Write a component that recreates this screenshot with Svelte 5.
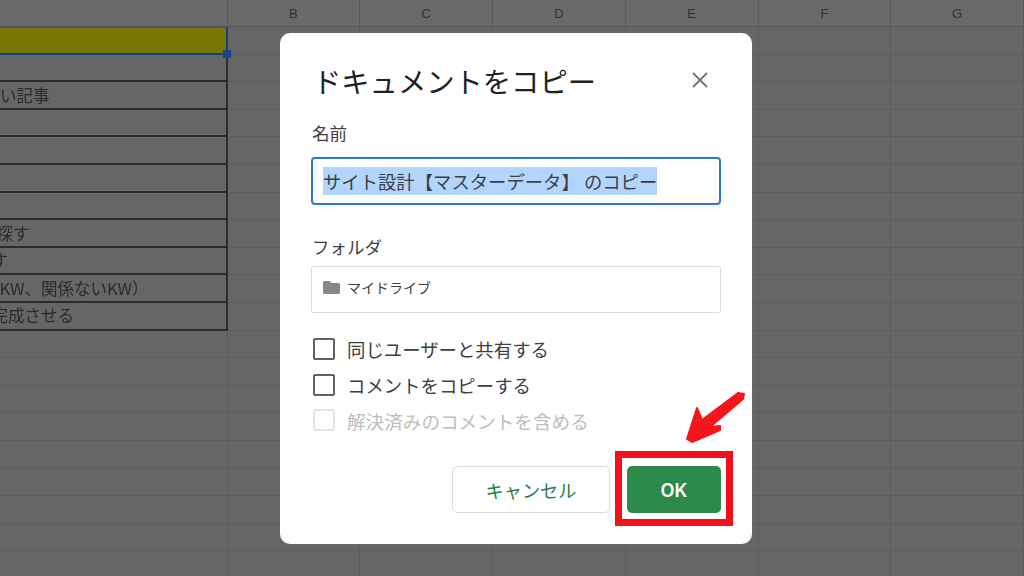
<script lang="ts">
    const columns = ["B", "C", "D", "E", "F", "G"];
    // column A is scrolled off to the left, so the text is shifted out of the cell
    const rows = [
        { text: "", shift: 0 },
        { text: "ない記事", shift: 16.5 },
        { text: "", shift: 0 },
        { text: "", shift: 0 },
        { text: "", shift: 0 },
        { text: "", shift: 0 },
        { text: "を探す", shift: 20 },
        { text: "探す", shift: 25 },
        { text: "（KW、関係ないKW）", shift: 17 },
        { text: "を完成させる", shift: 25 },
    ];
    const emptyRows = 10;
</script>

<div class="sheet">
    <div class="corner"></div>
    {#each columns as col}
        <div class="col-head">{col}</div>
    {/each}

    <div class="a-cell selected"><span class="handle"></span></div>
    {#each columns as col}
        <div class="cell"></div>
    {/each}

    {#each rows as row}
        <div class="a-cell">
            <span class="a-text" style="margin-left: -{row.shift}px">{row.text}</span>
        </div>
        {#each columns as col}
            <div class="cell"></div>
        {/each}
    {/each}

    {#each Array(emptyRows) as _}
        <div class="cell"></div>
        {#each columns as col}
            <div class="cell"></div>
        {/each}
    {/each}
</div>

<div class="dialog">
    <div class="title-row">
        <h1>ドキュメントをコピー</h1>
        <svg class="close" viewBox="0 0 16 16" width="16" height="16">
            <path d="M1 1 L15 15 M15 1 L1 15" stroke="#6f7276" stroke-width="1.8" fill="none" />
        </svg>
    </div>

    <div class="label name-label">名前</div>
    <div class="input focused"><span class="sel">サイト設計【マスターデータ】 のコピー</span></div>

    <div class="label folder-label">フォルダ</div>
    <div class="input folder">
        <svg viewBox="0 0 17 13" width="17" height="13">
            <path d="M1.5 0 H6.5 L8.5 2 H15.5 A1.5 1.5 0 0 1 17 3.5 V11.5 A1.5 1.5 0 0 1 15.5 13 H1.5 A1.5 1.5 0 0 1 0 11.5 V1.5 A1.5 1.5 0 0 1 1.5 0 Z" fill="#85878a" />
        </svg>
        <span>マイドライブ</span>
    </div>

    <div class="checks">
        <div class="check"><span class="box"></span>同じユーザーと共有する</div>
        <div class="check"><span class="box"></span>コメントをコピーする</div>
        <div class="check disabled"><span class="box"></span>解決済みのコメントを含める</div>
    </div>

    <div class="actions">
        <div class="btn cancel">キャンセル</div>
        <div class="btn ok">OK</div>
    </div>

    <div class="highlight"></div>
    <svg class="arrow" viewBox="0 0 62 54" width="62" height="54">
        <path d="M3 47 L13 16 L18 28 L54 1 L60 2 L59 7 L26 35 L36 34 L36 38 L8 50 Z" fill="#f5161c" stroke="#f5161c" stroke-width="2" stroke-linejoin="round" />
    </svg>
</div>

<style>
    :global(body) {
        margin: 0;
        background: #666;
        overflow: hidden;
    }

    .sheet {
        display: grid;
        grid-template-columns: 227.5px repeat(6, 132.75px);
        grid-template-rows: 27px repeat(21, 27.6px);
        width: 1024px;
        height: 576px;
        overflow: hidden;
        background: #666;
        font-family: "Noto Sans CJK JP", sans-serif;
        color: #2b2b2b;
        filter: blur(0.4px);
    }

    .corner,
    .col-head {
        box-sizing: border-box;
        background: #696969;
        border-bottom: 1px solid #555;
        border-right: 1px solid #5a5a5a;
    }

    .col-head {
        display: flex;
        align-items: center;
        justify-content: center;
        font-family: "Liberation Sans", sans-serif;
        font-size: 13px;
        color: #333;
    }

    .cell {
        box-sizing: border-box;
        border-bottom: 1px solid #5d5d5d;
        border-right: 1px solid #5d5d5d;
    }

    .a-cell {
        box-sizing: border-box;
        display: flex;
        align-items: center;
        overflow: hidden;
        border-bottom: 2px solid #2c2c2c;
        border-right: 2px solid #2c2c2c;
        font-size: 16.5px;
        white-space: nowrap;
    }

    .a-text {
        line-height: 1;
    }

    .selected {
        position: relative;
        overflow: visible;
        background: #777604;
        border-top: 1px solid #2c5a7c;
        border-bottom: 2px solid #17407f;
        border-right: 2px solid #17407f;
        z-index: 1;
    }

    .handle {
        position: absolute;
        right: -5px;
        bottom: -5px;
        width: 8px;
        height: 8px;
        background: #17458c;
    }

    .dialog {
        position: absolute;
        left: 280px;
        top: 33px;
        box-sizing: border-box;
        width: 472px;
        height: 511px;
        padding: 0 31px;
        background: #fff;
        border-radius: 10px;
        font-family: "Noto Sans CJK JP", sans-serif;
        color: #3c4043;
    }

    .title-row {
        display: flex;
        align-items: center;
        justify-content: space-between;
        height: 46px;
        padding: 24px 13px 0 2px;
    }

    h1 {
        margin: 0;
        font-size: 28.3px;
        font-weight: 400;
        color: #202124;
        white-space: nowrap;
    }

    .label {
        font-size: 17.5px;
        line-height: 24px;
        padding-left: 1px;
    }

    .name-label {
        margin-top: 18px;
    }

    .folder-label {
        margin-top: 30px;
    }

    .input {
        box-sizing: border-box;
        width: 410px;
        display: flex;
        align-items: center;
        white-space: nowrap;
    }

    .focused {
        height: 48px;
        margin-top: 12px;
        padding-left: 10px;
        border: 2px solid #2f78cf;
        border-radius: 4px;
        font-size: 18.35px;
    }

    .sel {
        background: #b4d5fb;
        line-height: 28px;
        color: #3a4048;
    }

    .folder {
        height: 47px;
        margin-top: 7px;
        padding: 0 0 5px 11px;
        gap: 7px;
        border: 1px solid #dadce0;
        border-radius: 2px;
        font-size: 14px;
    }

    .checks {
        display: flex;
        flex-direction: column;
        gap: 13.5px;
        margin-top: 25px;
    }

    .check {
        display: flex;
        align-items: center;
        gap: 12px;
        height: 22px;
        padding-left: 2px;
        font-size: 18.4px;
        white-space: nowrap;
    }

    .box {
        box-sizing: border-box;
        width: 22px;
        height: 22px;
        border: 2.5px solid #5f6368;
        border-radius: 2px;
    }

    .disabled {
        color: #bcbec0;
        font-size: 18.6px;
    }

    .disabled .box {
        border: 2px solid #e4e5e6;
    }

    .actions {
        display: flex;
        justify-content: flex-end;
        gap: 17px;
        margin-top: 35px;
    }

    .btn {
        box-sizing: border-box;
        display: flex;
        align-items: center;
        justify-content: center;
        height: 47px;
        border-radius: 5px;
        font-size: 18.2px;
        font-weight: 400;
    }

    .cancel {
        width: 158px;
        border: 1px solid #dadce0;
        color: #2a8048;
    }

    .ok {
        width: 94px;
        background: #2d8a4d;
        color: #fff;
        font-family: "Inter", sans-serif;
        font-weight: 600;
    }

    .highlight {
        position: absolute;
        left: 335px;
        top: 418px;
        box-sizing: border-box;
        width: 118px;
        height: 75px;
        border: 7px solid #f2101a;
    }

    .arrow {
        position: absolute;
        left: 404px;
        top: 359px;
    }
</style>
